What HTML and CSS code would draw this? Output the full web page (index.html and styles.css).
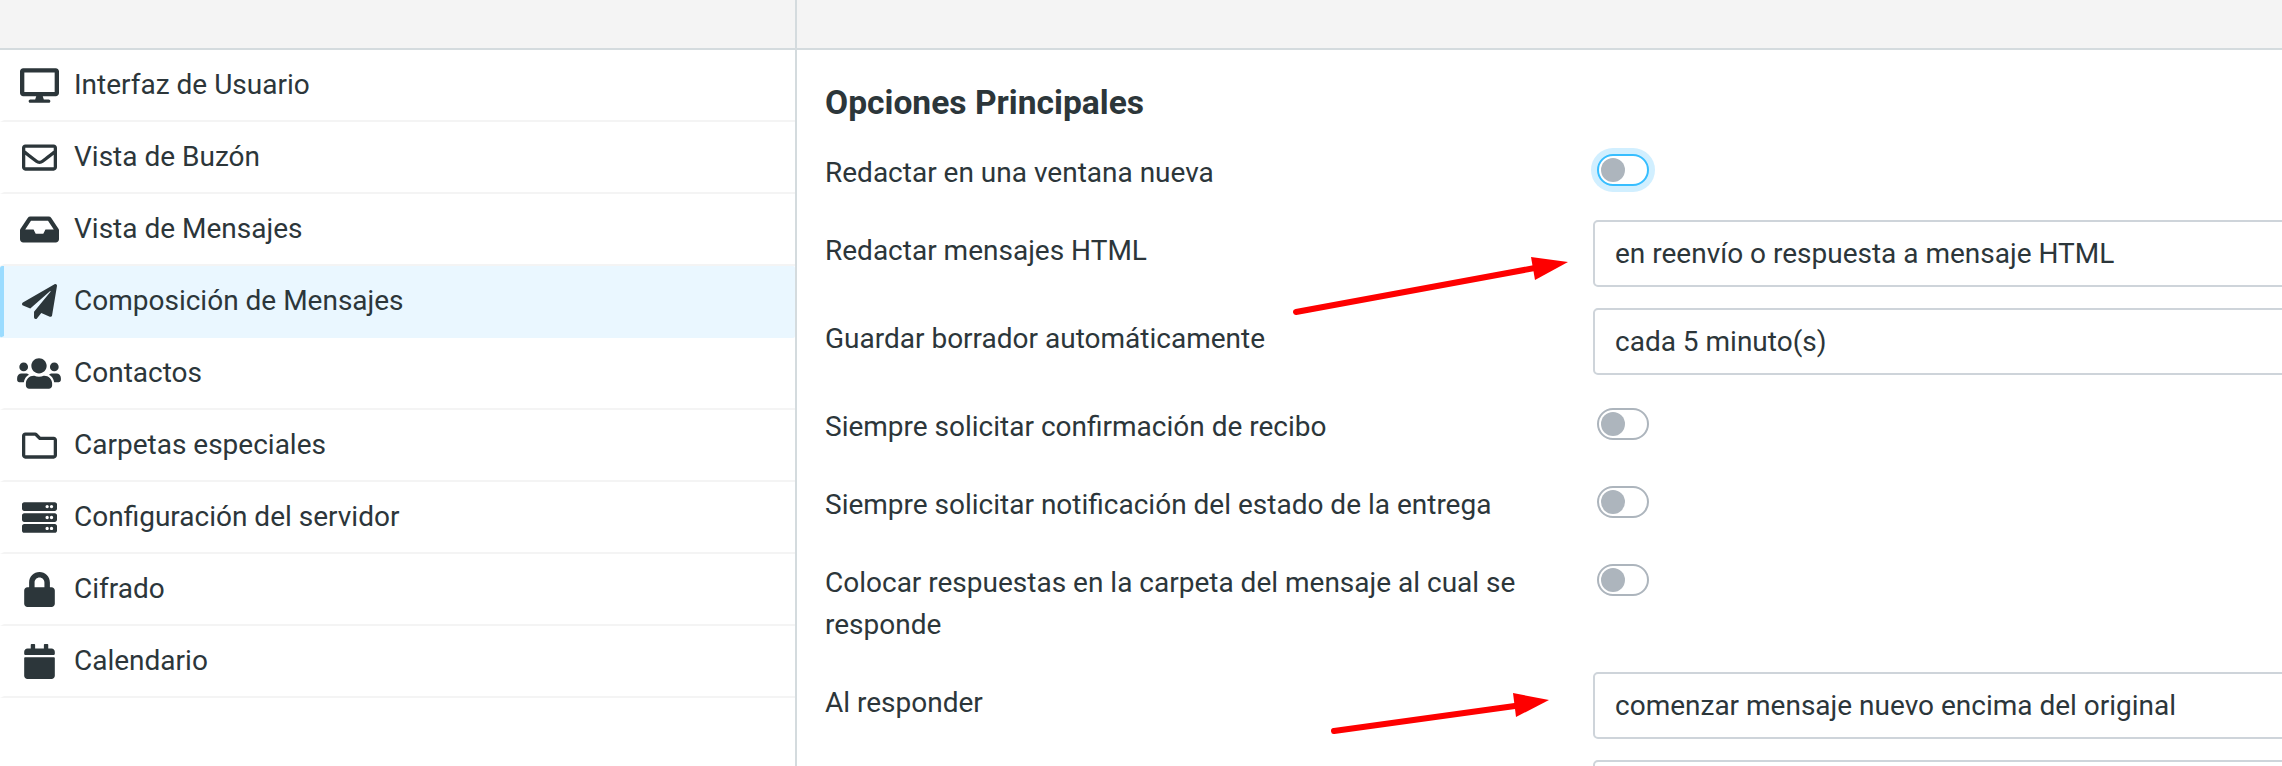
FILE: index.html
```html
<!DOCTYPE html>
<html lang="es">
<head>
  <meta charset="UTF-8" />
  <title>Configuración - Composición de Mensajes</title>
  <link rel="stylesheet" href="styles.css">
</head>
<body>
  <div class="app">
    <!-- Columna de secciones -->
    <aside class="sidebar">
      <div class="topbar"></div>
      <ul class="nav">
        <li class="nav-item">
          <span class="nav-icon"><svg width="39" height="35" viewBox="0 0 576 512"><path d="M528 0H48C21.5 0 0 21.5 0 48v320c0 26.5 21.5 48 48 48h192l-16 48h-72c-13.3 0-24 10.7-24 24s10.7 24 24 24h272c13.3 0 24-10.7 24-24s-10.7-24-24-24h-72l-16-48h192c26.5 0 48-21.5 48-48V48c0-26.5-21.5-48-48-48zm-16 352H64V64h448v288z"/></svg></span>
          Interfaz de Usuario
        </li>
        <li class="nav-item">
          <span class="nav-icon"><svg width="35" height="35" viewBox="0 0 512 512"><path d="M464 64H48C21.49 64 0 85.49 0 112v288c0 26.51 21.49 48 48 48h416c26.51 0 48-21.49 48-48V112c0-26.51-21.49-48-48-48zm0 48v40.805c-22.422 18.259-58.168 46.651-134.587 106.49-16.841 13.247-50.201 45.072-73.413 44.701-23.208.375-56.579-31.459-73.413-44.701C106.18 199.465 70.425 171.067 48 152.805V112h416zM48 400V214.398c22.914 18.251 55.409 43.862 104.938 82.646 21.857 17.205 60.134 55.186 103.062 54.955 42.717.231 80.509-37.199 103.053-54.947 49.528-38.783 82.032-64.401 104.947-82.653V400H48z"/></svg></span>
          Vista de Buzón
        </li>
        <li class="nav-item">
          <span class="nav-icon"><svg width="39" height="35" viewBox="0 0 576 512"><path d="M567.938 243.908L462.25 85.374A48.003 48.003 0 0 0 422.311 64H153.689a48 48 0 0 0-39.938 21.374L8.062 243.908A47.994 47.994 0 0 0 0 270.533V400c0 26.51 21.49 48 48 48h480c26.51 0 48-21.49 48-48V270.533a47.994 47.994 0 0 0-8.062-26.625zM162.252 128h251.497l85.333 128H376l-32 64H232l-32-64H76.918l85.334-128z"/></svg></span>
          Vista de Mensajes
        </li>
        <li class="nav-item selected">
          <span class="nav-icon"><svg width="35" height="35" viewBox="0 0 512 512"><path d="M476 3.2L12.5 270.6c-18.1 10.4-15.8 35.6 2.2 43.2L121 358.4l287.3-253.2c5.5-4.9 13.3 2.6 8.6 8.3L176 407v80.5c0 23.6 28.5 32.9 42.5 15.8L282 426l124.6 52.2c14.2 6 30.4-2.9 33-18.2l72-432C515 7.8 493.3-6.8 476 3.2z"/></svg></span>
          Composición de Mensajes
        </li>
        <li class="nav-item">
          <span class="nav-icon"><svg width="44" height="35" viewBox="0 0 640 512"><path d="M96 224c35.3 0 64-28.7 64-64s-28.7-64-64-64-64 28.7-64 64 28.7 64 64 64zm448 0c35.3 0 64-28.7 64-64s-28.7-64-64-64-64 28.7-64 64 28.7 64 64 64zm32 32h-64c-17.6 0-33.5 7.1-45.1 18.6 40.3 22.1 68.9 62 75.1 109.4h66c17.7 0 32-14.3 32-32v-32c0-35.3-28.7-64-64-64zm-256 0c61.9 0 112-50.1 112-112S381.9 32 320 32 208 82.1 208 144s50.1 112 112 112zm76.8 32h-8.3c-20.8 10-43.9 16-68.5 16s-47.6-6-68.5-16h-8.3C179.6 288 128 339.6 128 403.2V432c0 26.5 21.5 48 48 48h288c26.5 0 48-21.5 48-48v-28.8c0-63.6-51.6-115.2-115.2-115.2zm-223.7-13.4C161.5 263.1 145.6 256 128 256H64c-35.3 0-64 28.7-64 64v32c0 17.7 14.3 32 32 32h65.9c6.3-47.4 34.9-87.3 75.2-109.4z"/></svg></span>
          Contactos
        </li>
        <li class="nav-item">
          <span class="nav-icon"><svg width="35" height="35" viewBox="0 0 512 512"><path d="M464 128H272l-54.63-54.63c-6-6-14.14-9.37-22.63-9.37H48C21.49 64 0 85.49 0 112v288c0 26.51 21.49 48 48 48h416c26.51 0 48-21.49 48-48V176c0-26.51-21.49-48-48-48zm0 272H48V112h140.12l54.63 54.63c6 6 14.14 9.37 22.63 9.37H464v224z"/></svg></span>
          Carpetas especiales
        </li>
        <li class="nav-item">
          <span class="nav-icon"><svg width="35" height="35" viewBox="0 0 512 512"><path d="M480 160H32c-17.673 0-32-14.327-32-32V64c0-17.673 14.327-32 32-32h448c17.673 0 32 14.327 32 32v64c0 17.673-14.327 32-32 32zm-48-88c-13.255 0-24 10.745-24 24s10.745 24 24 24 24-10.745 24-24-10.745-24-24-24zm-64 0c-13.255 0-24 10.745-24 24s10.745 24 24 24 24-10.745 24-24-10.745-24-24-24zm112 248H32c-17.673 0-32-14.327-32-32v-64c0-17.673 14.327-32 32-32h448c17.673 0 32 14.327 32 32v64c0 17.673-14.327 32-32 32zm-48-88c-13.255 0-24 10.745-24 24s10.745 24 24 24 24-10.745 24-24-10.745-24-24-24zm-64 0c-13.255 0-24 10.745-24 24s10.745 24 24 24 24-10.745 24-24-10.745-24-24-24zm112 248H32c-17.673 0-32-14.327-32-32v-64c0-17.673 14.327-32 32-32h448c17.673 0 32 14.327 32 32v64c0 17.673-14.327 32-32 32zm-48-88c-13.255 0-24 10.745-24 24s10.745 24 24 24 24-10.745 24-24-10.745-24-24-24zm-64 0c-13.255 0-24 10.745-24 24s10.745 24 24 24 24-10.745 24-24-10.745-24-24-24z"/></svg></span>
          Configuración del servidor
        </li>
        <li class="nav-item">
          <span class="nav-icon"><svg width="31" height="35" viewBox="0 0 448 512"><path d="M400 224h-24v-72C376 68.2 307.8 0 224 0S72 68.2 72 152v72H48c-26.5 0-48 21.5-48 48v192c0 26.5 21.5 48 48 48h352c26.5 0 48-21.5 48-48V272c0-26.5-21.5-48-48-48zm-104 0H152v-72c0-39.7 32.3-72 72-72s72 32.3 72 72v72z"/></svg></span>
          Cifrado
        </li>
        <li class="nav-item">
          <span class="nav-icon"><svg width="31" height="35" viewBox="0 0 448 512"><path d="M12 192h424c6.6 0 12 5.4 12 12v260c0 26.5-21.5 48-48 48H48c-26.5 0-48-21.5-48-48V204c0-6.6 5.4-12 12-12zm436-44v-36c0-26.5-21.5-48-48-48h-48V12c0-6.6-5.4-12-12-12h-40c-6.6 0-12 5.4-12 12v52H160V12c0-6.6-5.4-12-12-12h-40c-6.6 0-12 5.4-12 12v52H48C21.5 64 0 85.5 0 112v36c0 6.6 5.4 12 12 12h424c6.6 0 12-5.4 12-12z"/></svg></span>
          Calendario
        </li>
      </ul>
    </aside>

    <!-- Formulario de opciones -->
    <main class="content">
      <div class="topbar"></div>
      <section class="options">
        <h2 class="options-title">Opciones Principales</h2>

        <div class="form-row">
          <label class="form-label">Redactar en una ventana nueva</label>
          <div class="form-control"><span class="toggle focused"></span></div>
        </div>
        <div class="form-row">
          <label class="form-label">Redactar mensajes HTML</label>
          <div class="form-control"><div class="select">en reenvío o respuesta a mensaje HTML</div></div>
        </div>
        <div class="form-row">
          <label class="form-label">Guardar borrador automáticamente</label>
          <div class="form-control"><div class="select">cada 5 minuto(s)</div></div>
        </div>
        <div class="form-row">
          <label class="form-label">Siempre solicitar confirmación de recibo</label>
          <div class="form-control"><span class="toggle"></span></div>
        </div>
        <div class="form-row">
          <label class="form-label">Siempre solicitar notificación del estado de la entrega</label>
          <div class="form-control"><span class="toggle"></span></div>
        </div>
        <div class="form-row">
          <label class="form-label">Colocar respuestas en la carpeta del mensaje al cual se responde</label>
          <div class="form-control"><span class="toggle"></span></div>
        </div>
        <div class="form-row">
          <label class="form-label">Al responder</label>
          <div class="form-control"><div class="select">comenzar mensaje nuevo encima del original</div></div>
        </div>
        <div class="form-row">
          <label class="form-label"></label>
          <div class="form-control"><div class="select"></div></div>
        </div>
      </section>
    </main>
  </div>

  <!-- Flechas rojas dibujadas encima de la captura -->
  <svg class="arrows" width="2282" height="766" viewBox="0 0 2282 766">
    <path class="arrow-line" d="M1296 312L1540 267"/>
    <path class="arrow-head" d="M1531 257L1568 262L1535 280Z"/>
    <path class="arrow-line" d="M1334 731L1522 705"/>
    <path class="arrow-head" d="M1513 693L1549 700L1516 717Z"/>
  </svg>
</body>
</html>
```

FILE: styles.css
```css
* {
  margin: 0;
  padding: 0;
  box-sizing: border-box;
}

html {
  overflow: hidden;
}

body {
  font-family: Roboto, "Liberation Sans", sans-serif;
  font-size: 28px;
  line-height: 42px;
  color: #2c363a;
  background: #fff;
  height: 766px;
  overflow: hidden;
  position: relative;
}

.app {
  display: grid;
  grid-template-columns: 797px 1fr;
  height: 766px;
}

.topbar {
  height: 50px;
  background: #f4f4f4;
  border-bottom: 2px solid #d4dbde;
}

/* Левая колонка */
.sidebar {
  border-right: 2px solid #d4dbde;
}

.nav {
  list-style: none;
}

.nav-item {
  display: flex;
  align-items: center;
  gap: 15px;
  height: 72px;
  padding-left: 15px;
  border-left: 4px solid transparent;
  border-bottom: 2px solid #f4f4f4;
}

.nav-item.selected {
  background: #eaf7ff;
  border-left-color: #9bdcff;
  border-bottom-color: #eaf7ff;
  border-radius: 2px;
}

.nav-icon {
  display: flex;
  justify-content: center;
  flex: none;
  width: 40px;
}

.nav-icon svg {
  flex: none;
  fill: #2c363a;
}

/* Форма */
.content {
  min-width: 0;
  height: 766px;
  overflow: hidden;
}

.options {
  padding: 30px 0 0 28px;
}

.options-title {
  font-size: 33.6px;
  line-height: 46px;
  font-weight: 700;
  margin-bottom: 16px;
}

.form-row {
  display: flex;
  margin-bottom: 21px;
}

.form-label {
  flex: none;
  width: 768px;
  padding: 10px 40px 5px 0;
}

.form-control {
  flex: none;
  width: 800px;
}

.select {
  height: 67px;
  padding: 0 20px;
  line-height: 63px;
  border: 2px solid #ced4da;
  border-radius: 5px;
}

.toggle {
  display: block;
  position: relative;
  width: 52px;
  height: 32px;
  margin: 12px 0 0 4px;
  border: 2px solid #adb5bd;
  border-radius: 16px;
  background: #fff;
}

.toggle::after {
  content: "";
  position: absolute;
  top: 2px;
  left: 2px;
  width: 24px;
  height: 24px;
  border-radius: 50%;
  background: #adb5bd;
}

.toggle.focused {
  border-color: #37beff;
  box-shadow: 0 0 0 6px #d1efff;
}

/* Стрелки поверх всего */
.arrows {
  position: absolute;
  top: 0;
  left: 0;
  pointer-events: none;
}

.arrow-line {
  fill: none;
  stroke: #fe0000;
  stroke-width: 6;
  stroke-linecap: round;
}

.arrow-head {
  fill: #fe0000;
}
```
